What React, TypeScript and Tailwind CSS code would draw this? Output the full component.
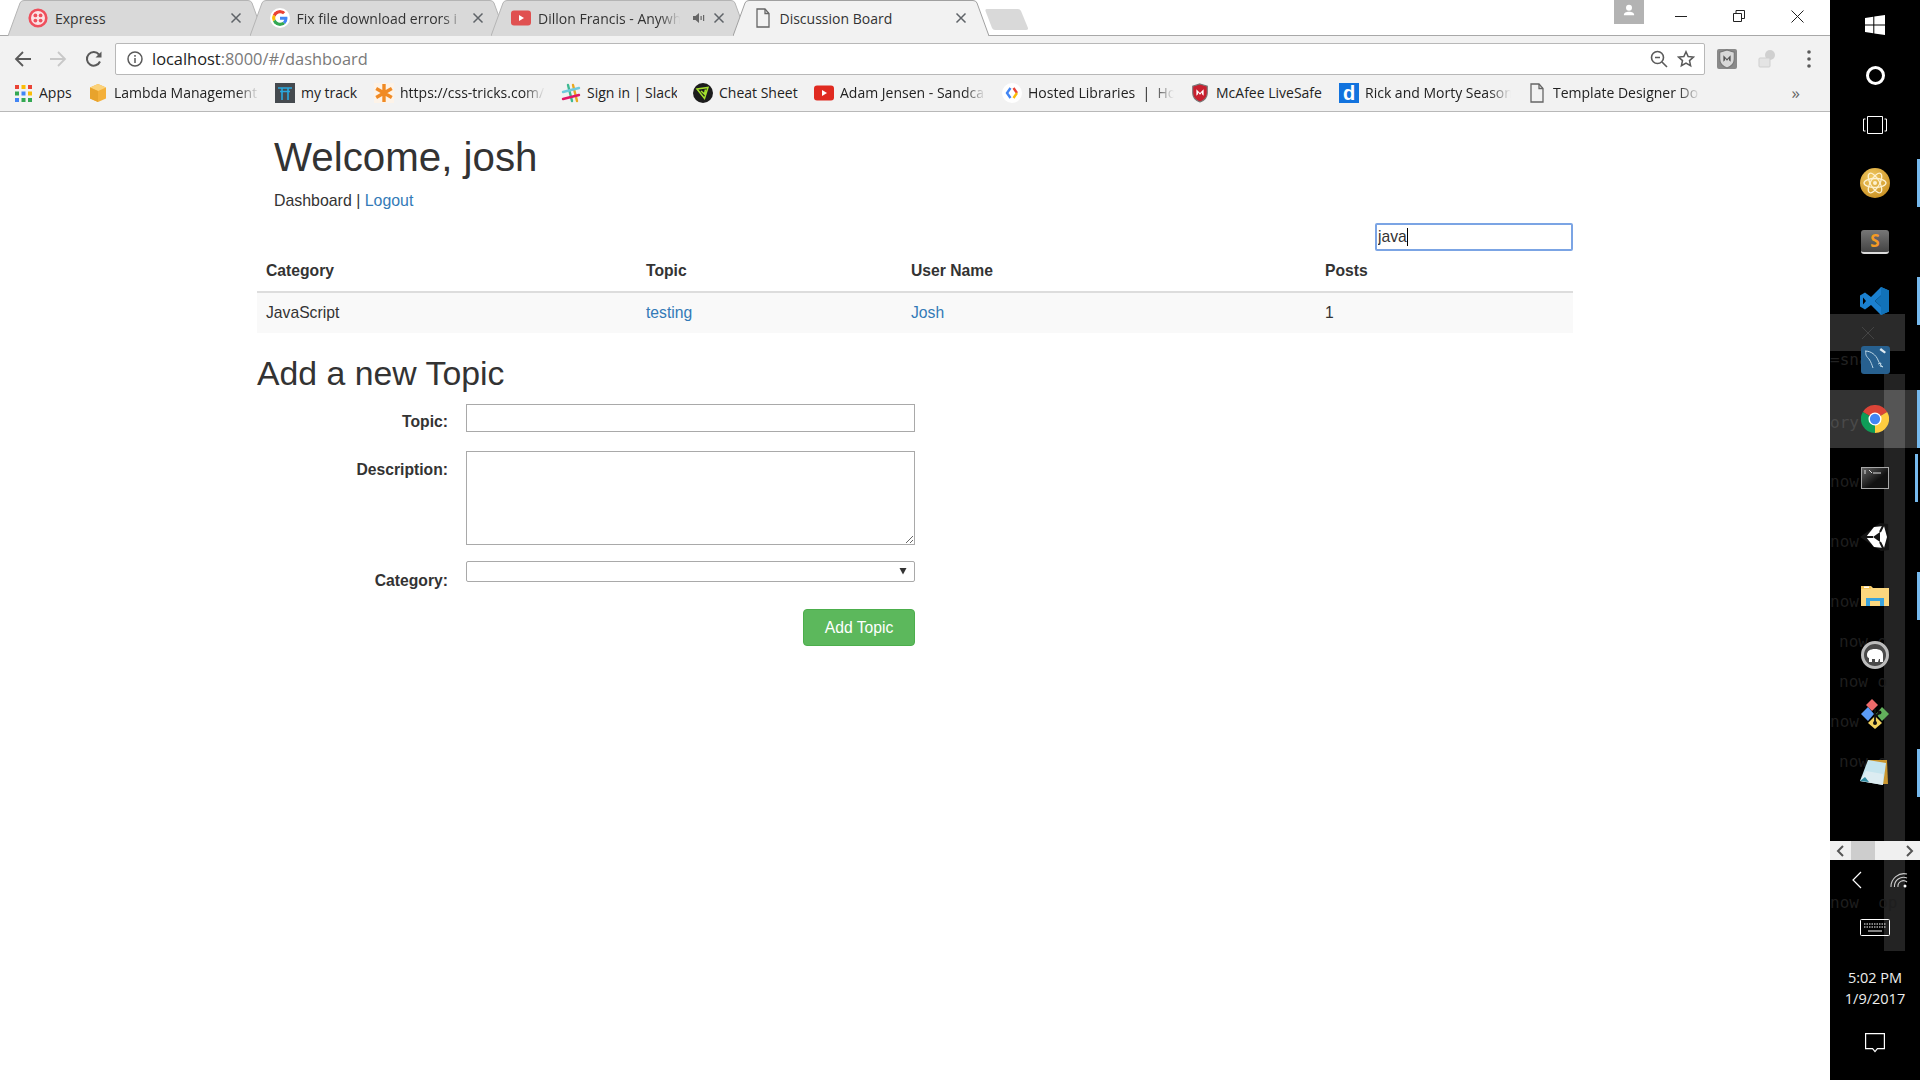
import type { ReactNode } from 'react'

const UI_FONT = 'font-["Open_Sans",sans-serif]'

const FileIcon = ({ className = '' }: { className?: string }) => (
  <svg viewBox="0 0 14 20" className={`h-5 w-[14px] ${className}`} fill="none" stroke="#666" strokeWidth="1.3">
    <path d="M1 1h8l4 4.5V19H1z" />
    <path d="M9 1v4.5h4" />
  </svg>
)

const TwilioIcon = () => (
  <svg viewBox="0 0 20 20" className="size-5">
    <circle cx="10" cy="10" r="8.3" fill="#fbe3e5" stroke="#ef4f5c" strokeWidth="2.6" />
    <circle cx="7.4" cy="7.4" r="1.9" fill="#ef4f5c" />
    <circle cx="12.6" cy="7.4" r="1.9" fill="#ef4f5c" />
    <circle cx="7.4" cy="12.6" r="1.9" fill="#ef4f5c" />
    <circle cx="12.6" cy="12.6" r="1.9" fill="#ef4f5c" />
  </svg>
)

const GoogleIcon = () => (
  <svg viewBox="0 0 48 48" className="size-5 rounded-full bg-white p-[2px]">
    <path fill="#EA4335" d="M24 9.5c3.5 0 6.700 1.300 9.200 3.400l6.900-6.900C35.900 2.400 30.300 0 24 0 14.600 0 6.500 5.400 2.600 13.200l8 6.200C12.500 13.600 17.800 9.500 24 9.500z" />
    <path fill="#4285F4" d="M46.500 24.500c0-1.600-.2-3.100-.4-4.500H24v9h12.700c-.6 2.900-2.200 5.400-4.700 7l7.600 5.900c4.400-4.100 6.900-10.100 6.900-17.400z" />
    <path fill="#FBBC05" d="M10.600 28.600c-.5-1.400-.8-3-.8-4.600s.3-3.200.8-4.600l-8-6.200C.9 16.500 0 20.100 0 24s.9 7.500 2.600 10.800l8-6.200z" />
    <path fill="#34A853" d="M24 48c6.500 0 11.900-2.100 15.900-5.800L32 36.300c-2.100 1.400-4.800 2.300-8 2.300-6.200 0-11.500-4.100-13.400-9.800l-8 6.200C6.500 42.600 14.600 48 24 48z" />
  </svg>
)

const YoutubeIcon = ({ color = '#e02a20' }: { color?: string }) => (
  <svg viewBox="0 0 20 16" className="h-4 w-5">
    <rect width="20" height="15" y="0.500" rx="3" fill={color} />
    <path d="M8 5l5 3-5 3z" fill="#fff" />
  </svg>
)

const CloseIcon = () => (
  <svg viewBox="0 0 12 12" className="size-3 shrink-0" stroke="#5f6368" strokeWidth="1.500">
    <path d="M1.500 1.500l9 9M10.500 1.500l-9 9" />
  </svg>
)

const SpeakerIcon = () => (
  <svg viewBox="0 0 12 12" className="size-3 shrink-0" fill="#666">
    <path d="M0 4h2.500L6 1v10L2.500 8H0z" />
    <rect x="7.500" y="4" width="1.200" height="4" />
    <rect x="10" y="3" width="1.200" height="6" />
  </svg>
)

function Tab({ label, icon, active, audio, dim }: { label: string; icon: ReactNode; active?: boolean; audio?: boolean; dim?: boolean }) {
  return (
    <div className="relative -mr-[14.5px] flex h-9 w-[256px] shrink-0 items-center pr-[22px] pl-5">
      <svg viewBox="0 0 256 36" className={`absolute inset-0 h-9 w-[256px] ${active ? 'z-10' : ''}`} fill="none">
        <path
          d="M0 36 L12 3 Q13 .5 16 .5 L240 .5 Q243 .5 244 3 L256 36"
          fill={active ? '#f2f2f2' : '#d9d9d9'}
          stroke={active ? '#a0a0a0' : '#b4b4b4'}
        />
      </svg>
      <div className="relative z-10 flex w-full items-center">
        <span className="flex w-5 shrink-0 justify-center">{icon}</span>
        <span
          className={`mt-[2px] ml-[7px] min-w-0 flex-1 overflow-hidden text-[14px] leading-5 whitespace-nowrap text-[#333] ${
            dim ? '[mask-image:linear-gradient(to_right,#000_84%,transparent_98%)]' : ''
          } ${audio ? 'mr-[10px]' : 'mr-[3px]'}`}
        >
          {label}
        </span>
        {audio && (
          <span className="mr-[8px]">
            <SpeakerIcon />
          </span>
        )}
        <CloseIcon />
      </div>
    </div>
  )
}

function TabStrip() {
  return (
    <div className="relative flex h-9 items-start bg-white pl-2">
      <div className="absolute inset-x-0 bottom-0 h-px bg-[#a8a8a8]" />
      <Tab label="Express" icon={<TwilioIcon />} />
      <Tab label="Fix file download errors i" icon={<GoogleIcon />} dim />
      <Tab label="Dillon Francis - Anywh" icon={<YoutubeIcon color="#e05050" />} audio dim />
      <Tab label="Discussion Board" icon={<FileIcon />} active />
      <svg viewBox="0 0 43 21" className="relative mt-[9px] ml-[11px] h-[21px] w-[43px] shrink-0">
        <path d="M2 0 H33 Q35 0 36 2 L43 19 Q43.500 21 41 21 H10 Q8 21 7 19 L.5 2 Q0 0 2 0z" fill="#d9d9d9" />
      </svg>
      <div className="relative ml-auto flex items-start pr-1">
        <div className="mr-2 flex h-6 w-[30px] items-center justify-center bg-[#b3b3b3] pb-1">
          <svg viewBox="0 0 14 14" className="size-3" fill="#fff">
            <circle cx="7" cy="4.500" r="3.500" />
            <path d="M1 13c0-3 2.500-4 6-4s6 1 6 4z" />
          </svg>
        </div>
        <div className="flex h-8 w-[58px] items-center justify-center">
          <div className="h-px w-3 bg-[#222]" />
        </div>
        <div className="flex h-8 w-[58px] items-center justify-center">
          <svg viewBox="0 0 12 12" className="size-3" fill="none" stroke="#222">
            <path d="M.5 3.500h8v8h-8zM3 3.500v-3h8.500v8h-3" />
          </svg>
        </div>
        <div className="flex h-8 w-[58px] items-center justify-center">
          <svg viewBox="0 0 13 13" className="size-[13px]" fill="none" stroke="#222">
            <path d="M.5.5l12 12M12.500.5l-12 12" />
          </svg>
        </div>
      </div>
    </div>
  )
}

const McafeeShield = ({ dark }: { dark?: boolean }) => (
  <svg viewBox="0 0 20 22" className="h-5 w-5">
    <path d="M10 1l8 2.500V11c0 5-4 8.500-8 10-4-1.500-8-5-8-10V3.500z" fill={dark ? '#d8d8d8' : '#c8202f'} stroke="#777" strokeWidth="1.200" />
    <path d="M6 14V7l4 4 4-4v7l-1.800-1.500v-2L10 13l-2.200-2.500v2z" fill={dark ? '#555' : '#fff'} />
  </svg>
)

function Toolbar() {
  return (
    <div className="flex h-[44px] items-center bg-[#f2f2f2] pt-px pl-[5px]">
      <button className="flex w-[35px] justify-center">
        <svg viewBox="0 0 18 18" className="size-[18px]" fill="none" stroke="#5a5a5a" strokeWidth="1.800">
          <path d="M17 9H2M9 2L2 9l7 7" />
        </svg>
      </button>
      <button className="flex w-[35px] justify-center">
        <svg viewBox="0 0 18 18" className="size-[18px]" fill="none" stroke="#c8c8c8" strokeWidth="1.800">
          <path d="M1 9h15M9 2l7 7-7 7" />
        </svg>
      </button>
      <button className="flex w-[35px] justify-center pl-[2px]">
        <svg viewBox="0 0 18 18" className="size-[18px]" fill="none" stroke="#5a5a5a" strokeWidth="2">
          <path d="M15 11.500A6.800 6.800 0 1 1 14 4.500" />
          <path d="M16.500 1.500v6h-6z" fill="#5a5a5a" stroke="none" />
        </svg>
      </button>
      <div className="ml-[5px] flex h-8 w-[1590px] items-center rounded-[2px] border border-[#b8b8b8] bg-white pr-[9px] pl-[11px]">
        <svg viewBox="0 0 16 16" className="size-4 shrink-0" fill="none" stroke="#5a5a5a" strokeWidth="1.500">
          <circle cx="8" cy="8" r="7" />
          <path d="M8 7v5M8 4v1.800" />
        </svg>
        <span className="ml-[9px] flex-1 text-[16.400px] leading-6 text-[#222]">
          localhost<span className="text-[#7a7a7a]">:8000/#/dashboard</span>
        </span>
        <svg viewBox="0 0 18 18" className="size-[18px]" fill="none" stroke="#5a5a5a" strokeWidth="1.600">
          <circle cx="7.500" cy="7.500" r="6" />
          <path d="M5 7.500h5M12 12l5 5" />
        </svg>
        <svg viewBox="0 0 20 20" className="ml-[9px] size-[18px]" fill="none" stroke="#5a5a5a" strokeWidth="1.700">
          <path d="M10 2l2.400 5.300 5.800.6-4.300 3.900 1.200 5.700L10 14.600l-5.100 2.900 1.200-5.700L1.800 7.900l5.800-.6z" />
        </svg>
      </div>
      <span className="ml-[12px] flex size-5 items-center justify-center rounded-[2px] bg-[#8a8a8a]">
        <McafeeShield dark />
      </span>
      <svg viewBox="0 0 20 20" className="ml-[20px] size-5">
        <circle cx="13" cy="6" r="5" fill="#d0d0d0" />
        <rect x="2" y="9" width="11" height="9" rx="1" fill="#e4e4e4" stroke="#cfcfcf" />
      </svg>
      <svg viewBox="0 0 4 18" className="ml-[30px] h-[18px] w-1" fill="#5a5a5a">
        <circle cx="2" cy="2" r="1.800" />
        <circle cx="2" cy="9" r="1.800" />
        <circle cx="2" cy="16" r="1.800" />
      </svg>
    </div>
  )
}

const AppsIcon = () => (
  <svg viewBox="0 0 17 17" className="size-[17px]">
    {['#ea4335', '#fbbc05', '#ea4335', '#34a853', '#4285f4', '#fbbc05', '#4285f4', '#34a853', '#34a853'].map((c, i) => (
      <rect key={i} x={(i % 3) * 6.500} y={Math.floor(i / 3) * 6.500} width="4" height="4" fill={c} />
    ))}
  </svg>
)

const LambdaIcon = () => (
  <svg viewBox="0 0 20 20" className="size-5">
    <path d="M10 1l8 3.500v11L10 19l-8-3.500v-11z" fill="#f4b03a" />
    <path d="M2 4.500L10 8l8-3.500L10 1z" fill="#fbd27a" />
    <path d="M10 8v11l-8-3.500v-11z" fill="#e8a32c" />
  </svg>
)

const TrackIcon = () => (
  <span className="flex size-5 items-center justify-center bg-[#454a4f]">
    <svg viewBox="0 0 14 14" className="size-[14px]" fill="none" stroke="#29a9e0" strokeWidth="1.600">
      <path d="M0 2h14M2 5.500h10M4 2v12M10 2v12" />
    </svg>
  </span>
)

const AsteriskIcon = () => (
  <span className="flex size-5 items-center justify-center bg-[#fdf3e8]">
    <svg viewBox="0 0 20 20" className="size-5" stroke="#f08a24" strokeWidth="3.400">
      <path d="M10 1v18M2.200 5.500l15.600 9M17.800 5.500l-15.600 9" />
    </svg>
  </span>
)

const SlackIcon = () => (
  <svg viewBox="0 0 20 20" className="size-5" strokeWidth="2.400" strokeLinecap="round">
    <path d="M7 2l4 16" stroke="#3eb991" />
    <path d="M13 2l4 16" stroke="#e9a820" transform="translate(-1 0)" />
    <path d="M2 7l16-4" stroke="#6ecadc" transform="translate(0 2)" />
    <path d="M2 16l16-4" stroke="#e01765" />
  </svg>
)

const CheatIcon = () => (
  <svg viewBox="0 0 20 20" className="size-5">
    <circle cx="10" cy="10" r="10" fill="#1c1c1c" />
    <path d="M4 6l11-1.500-3.500 11zM8 8l3.500 3 1-4.500" fill="none" stroke="#a5e22c" strokeWidth="1.500" />
  </svg>
)

const CodeIcon = () => (
  <svg viewBox="0 0 20 20" className="size-5">
    <circle cx="10" cy="10" r="10" fill="#fff" />
    <path d="M8.500 5L5 10l3.500 5" fill="none" stroke="#4285f4" strokeWidth="2.400" />
    <path d="M11.500 5l3.500 5" fill="none" stroke="#ea4335" strokeWidth="2.400" />
    <path d="M15 10l-3.500 5" fill="none" stroke="#fbbc05" strokeWidth="2.400" />
  </svg>
)

const DailyIcon = () => (
  <span className="flex size-5 items-center justify-center bg-[#1273de] text-[20px] leading-none font-bold text-white font-['Liberation_Sans',sans-serif]">
    d
  </span>
)

type Bookmark = { label: string; icon: ReactNode; width: string; fade?: boolean }

const bookmarks: Bookmark[] = [
  { label: 'Apps', icon: <AppsIcon />, width: 'w-[33px]' },
  { label: 'Lambda Management', icon: <LambdaIcon />, width: 'w-[145px]', fade: true },
  { label: 'my track', icon: <TrackIcon />, width: 'w-[57px]' },
  { label: 'https://css-tricks.com/', icon: <AsteriskIcon />, width: 'w-[145px]', fade: true },
  { label: 'Sign in | Slack', icon: <SlackIcon />, width: 'w-[90px]' },
  { label: 'Cheat Sheet', icon: <CheatIcon />, width: 'w-[79px]' },
  { label: 'Adam Jensen - Sandca', icon: <YoutubeIcon />, width: 'w-[146px]', fade: true },
  { label: 'Hosted Libraries  |  Ho', icon: <CodeIcon />, width: 'w-[146px]', fade: true },
  { label: 'McAfee LiveSafe', icon: <McafeeShield />, width: 'w-[107px]' },
  { label: 'Rick and Morty Season', icon: <DailyIcon />, width: 'w-[146px]', fade: true },
  { label: 'Template Designer Do', icon: <FileIcon />, width: 'w-[147px]', fade: true },
]

function BookmarkBar() {
  return (
    <div className="flex h-[32px] items-start gap-4 border-b border-[#b8b8b8] bg-[#f2f2f2] pl-[13px]">
      {bookmarks.map((b) => (
        <div key={b.label} className="flex h-[26px] items-center gap-[6px]">
          <span className="flex w-5 shrink-0 justify-center">{b.icon}</span>
          <span
            className={`overflow-hidden text-[14px] leading-5 whitespace-pre text-[#222] ${b.width} ${
              b.fade ? '[mask-image:linear-gradient(to_right,#000_85%,transparent_100%)]' : ''
            }`}
          >
            {b.label}
          </span>
        </div>
      ))}
      <span className="ml-auto mr-[30px] text-[17px] leading-[26px] text-[#666]">»</span>
    </div>
  )
}

function Dashboard() {
  return (
    <main className="ml-[257px] w-[1316px] pt-[24px] text-[15.700px] leading-[22px] text-[#333] font-['Liberation_Sans',sans-serif]">
      <div className="pl-[17px]">
        <h1 className="text-[40.300px] leading-[44px]">Welcome, josh</h1>
        <p className="mt-[10px] text-[15.900px]">
          Dashboard | <a className="text-[#337ab7]">Logout</a>
        </p>
      </div>
      <div className="relative mt-[11px] flex justify-end">
        <input
          readOnly
          value="java"
          className="h-7 w-[198px] rounded-[2px] border-2 border-[#7ba4e4] px-px text-[15.700px] leading-6 text-[#333] outline-none"
        />
        <span className="absolute top-[5px] left-[1150px] h-[18px] w-px bg-black" />
      </div>
      <table className="w-full table-fixed border-collapse">
        <colgroup>
          <col className="w-[379px]" />
          <col className="w-[265px]" />
          <col className="w-[414px]" />
          <col />
        </colgroup>
        <thead>
          <tr className="h-[41px] border-b-2 border-[#ddd] text-left">
            <th className="px-[9px] font-bold">Category</th>
            <th className="px-[10px] font-bold">Topic</th>
            <th className="px-[10px] font-bold">User Name</th>
            <th className="px-[10px] font-bold">Posts</th>
          </tr>
        </thead>
        <tbody>
          <tr className="h-[41px] bg-[#f9f9f9]">
            <td className="px-[9px]">JavaScript</td>
            <td className="px-[10px] text-[#337ab7]">testing</td>
            <td className="px-[10px] text-[#337ab7]">Josh</td>
            <td className="px-[10px]">1</td>
          </tr>
        </tbody>
      </table>
      <h2 className="mt-[22px] text-[33.800px] leading-9">Add a new Topic</h2>
      <form className="mt-[13px] w-[658px]">
        <div className="flex items-start">
          <label className="w-[191px] pt-[7px] text-right font-bold">Topic:</label>
          <input className="ml-[18px] h-7 w-[449px] border border-[#a9a9a9]" />
        </div>
        <div className="mt-[18px] flex items-start">
          <label className="w-[191px] pt-2 text-right font-bold">Description:</label>
          <textarea className="ml-[18px] block h-[94px] w-[449px] border border-[#a9a9a9]" />
        </div>
        <div className="mt-[16px] flex items-start">
          <label className="w-[191px] pt-[9px] text-right font-bold">Category:</label>
          <div className="relative ml-[18px] h-[21px] w-[449px]">
            <select className="block h-full w-full appearance-none rounded-[2px] border border-[#a9a9a9] bg-white" />
            <svg viewBox="0 0 8 8" className="pointer-events-none absolute top-[6px] right-[8px] size-2" fill="#333">
              <path d="M.5 1h7L4 7.500z" />
            </svg>
          </div>
        </div>
        <div className="mt-[17px] flex justify-end">
          <button type="button" className="h-[37px] w-[112px] rounded-[4px] border border-[#4cae4c] bg-[#5cb85c] text-white">
            Add Topic
          </button>
        </div>
      </form>
    </main>
  )
}

const Strip = ({ className }: { className: string }) => <span className={`absolute w-[3px] bg-[#76b9ed] ${className}`} />

const ghostNow = [
  { cls: 'top-[470px] left-0', text: 'now' },
  { cls: 'top-[530px] left-0', text: 'now' },
  { cls: 'top-[590px] left-0', text: 'now' },
  { cls: 'top-[630px] left-[9px]', text: 'now o' },
  { cls: 'top-[670px] left-[9px]', text: 'now o' },
  { cls: 'top-[710px] left-0', text: 'now' },
  { cls: 'top-[750px] left-[9px]', text: 'now o' },
  { cls: 'top-[891px] left-0', text: 'now  op' },
]

function Backdrop() {
  return (
    <div className="pointer-events-none absolute inset-0 font-['DejaVu_Sans_Mono',monospace] text-[16px] leading-6 whitespace-pre">
      <div className="absolute top-[314px] left-0 flex h-[37px] w-[75px] items-center justify-center bg-[#2a2a2a]">
        <svg viewBox="0 0 14 14" className="size-[14px]" stroke="#444">
          <path d="M1 1l12 12M13 1L1 13" />
        </svg>
      </div>
      <div className="absolute top-[374px] bottom-[129px] left-[54px] w-[21px] bg-[#232323]" />
      <div className="absolute top-[390px] left-0 h-[58px] w-full bg-[#333]" />
      <div className="absolute top-[390px] left-[54px] h-[58px] w-[21px] bg-[#555]" />
      <span className="absolute top-[348px] left-0 text-[#222]">=sna</span>
      <span className="absolute top-[411px] left-0 text-[#4a4a4a]">ory</span>
      {ghostNow.map((g) => (
        <span key={g.cls} className={`absolute text-[#1e1e1e] ${g.cls}`}>
          {g.text}
        </span>
      ))}
    </div>
  )
}

const App = ({ children }: { children: ReactNode }) => <div className="flex h-[59px] items-center justify-center">{children}</div>

function Sidebar() {
  return (
    <aside className="relative flex h-[1080px] w-[90px] shrink-0 flex-col bg-black text-white font-['Open_Sans',sans-serif]">
      <Backdrop />
      <Strip className="top-[159px] right-0 h-[48px]" />
      <Strip className="top-[277px] right-0 h-[48px]" />
      <Strip className="top-[390px] right-0 h-[58px]" />
      <Strip className="top-[454px] right-[2px] h-[48px]" />
      <Strip className="top-[572px] right-0 h-[48px]" />
      <Strip className="top-[749px] right-0 h-[48px]" />

      <div className="relative flex h-[50px] items-center justify-center">
        <svg viewBox="0 0 20 20" className="size-5" fill="#fff">
          <path d="M0 3l8.300-1.200V9.500H0zM9.300 1.600L20 0v9.500H9.300zM0 10.500h8.300v7.700L0 17zM9.300 10.500H20V20L9.300 18.400z" />
        </svg>
      </div>
      <div className="relative flex h-[50px] items-center justify-center">
        <div className="size-[19px] rounded-full border-[3px] border-white" />
      </div>
      <div className="relative flex h-[50px] items-center justify-center">
        <svg viewBox="0 0 24 18" className="h-[18px] w-6" fill="none" stroke="#fff" strokeWidth="1">
          <path d="M4.500.5h15v17h-15zM2.500 3H.5v12h2M21.500 3h2v12h-2" />
        </svg>
      </div>

      <div className="relative mt-[3px] flex flex-col">
        <App>
          <svg viewBox="0 0 30 30" className="size-[30px]">
            <defs>
              <radialGradient id="atomGold" cx="0.400" cy="0.300" r="0.800">
                <stop offset="0" stopColor="#f0c860" />
                <stop offset="1" stopColor="#c88e20" />
              </radialGradient>
            </defs>
            <circle cx="15" cy="15" r="15" fill="url(#atomGold)" />
            <g fill="none" stroke="#fdf1cf" strokeWidth="1.300">
              <ellipse cx="15" cy="15" rx="11" ry="4.500" />
              <ellipse cx="15" cy="15" rx="11" ry="4.500" transform="rotate(60 15 15)" />
              <ellipse cx="15" cy="15" rx="11" ry="4.500" transform="rotate(120 15 15)" />
            </g>
            <circle cx="15" cy="15" r="2" fill="#fdf1cf" />
          </svg>
        </App>
        <App>
          <div className="relative flex h-6 w-7 items-center justify-center rounded-[3px] border-b-2 border-[#ddd] bg-gradient-to-b from-[#777] to-[#444] text-[17px] leading-none font-bold text-[#f59a23]">
            S
          </div>
        </App>
        <App>
          <svg viewBox="0 0 30 30" className="size-[30px]">
            <path d="M21 1l8 3.500v21L21 29 11 19l-6 4.500-5-3v-11l5-3 6 4.500zM21 9.500L15 15l6 5.500z" fill="#1b80cf" fillRule="evenodd" />
            <path d="M21 1l8 3.500v21L21 29z M21 9.500L15 15l6 5.500z" fill="#1172b9" fillRule="evenodd" />
            <path d="M3 11.500l3 3.500-3 3.500z" fill="#000" />
          </svg>
        </App>
        <App>
          <svg viewBox="0 0 29 28" className="h-7 w-[29px]">
            <rect width="29" height="28" rx="3" fill="#27608f" />
            <path d="M4 5c6 0 11 4 13 9 1 3 3 5 5 7M5 5c-1 4 1 6 3 8 2 3 3 6 4 9M17 18l3-1-1 3 3 1" fill="none" stroke="#b9d3e3" strokeWidth="1" />
            <path d="M20 2l5 4-1.500 1.500-5-3.500z" fill="#dfeaf1" />
          </svg>
        </App>
        <App>
          <svg viewBox="0 0 30 30" className="size-7">
            <path d="M15 15L28 7.500A15 15 0 0 0 2 7.500z" fill="#db4437" />
            <path d="M15 15l-13-7.500A15 15 0 0 0 15 30z" fill="#0f9d58" />
            <path d="M15 15l13-7.500A15 15 0 0 1 15 30z" fill="#ffcd40" />
            <circle cx="15" cy="15" r="7" fill="#fff" />
            <circle cx="15" cy="15" r="5.500" fill="#4285f4" />
          </svg>
        </App>
        <App>
          <svg viewBox="0 0 28 22" className="h-[22px] w-7">
            <defs>
              <linearGradient id="cmdGloss" x1="0" y1="0" x2="1" y2="1">
                <stop offset="0" stopColor="#666" />
                <stop offset="0.600" stopColor="#111" />
              </linearGradient>
            </defs>
            <rect x=".5" y=".5" width="27" height="21" fill="url(#cmdGloss)" stroke="#a8a8a8" />
            <path d="M3 4h2M3 6h2M8 3l3 3M12 6h8" stroke="#ddd" strokeWidth="1" />
          </svg>
        </App>
        <App>
          <svg viewBox="0 0 30 30" className="size-[30px]">
            <path d="M0 15L20 1l8 1 1 26-8 1z" fill="#141414" />
            <path d="M24 4l3 11-3 11-10-1-8-10 8-10z" fill="#fff" />
            <path d="M20 10l3.500-7M20 20l3.500 7M13 15H4" stroke="#141414" strokeWidth="2" fill="none" />
            <path d="M13 15l7-5v10z" fill="#141414" />
          </svg>
        </App>
        <App>
          <svg viewBox="0 0 28 24" className="h-6 w-7">
            <path d="M0 2h10l2 2h16v18H0z" fill="#fcd77e" />
            <rect y="2" width="10" height="3" fill="#f7c75a" />
            <rect x="3" y="2.500" width="5" height="1.500" fill="#fff" />
            <path d="M5 22v-8h18v8h-4v-5H9v5z" fill="#3aa3dd" />
          </svg>
        </App>
        <App>
          <svg viewBox="0 0 28 28" className="size-7">
            <circle cx="14" cy="14" r="12.500" fill="#4a4a4a" stroke="#bdbdbd" strokeWidth="3" />
            <path d="M6 14c0-4 3-6 8-6s8 2 8 6v7h-3v-3h-1l-1 3h-3v-3h-3v3H8v-4c-1 0-2-1-2-3z" fill="#fff" />
          </svg>
        </App>
        <App>
          <svg viewBox="0 0 30 30" className="size-[30px]">
            <path d="M15 0l-6 6 6 6 6-6z" fill="#ee6a6a" transform="translate(-3 0)" />
            <path d="M8 8l-7 7 7 7 6-7z" fill="#5b9cf7" />
            <path d="M22 8l7 7-7 7-6-7z" fill="#62b05c" />
            <path d="M15 17l-7 7 7 6 7-6z" fill="#f4d35e" />
            <path d="M15 10v15M19 14l-4 4" stroke="#111" strokeWidth="1.800" fill="none" />
            <circle cx="15" cy="24" r="2" fill="#111" />
            <circle cx="19.500" cy="13.500" r="2" fill="#111" />
          </svg>
        </App>
        <App>
          <svg viewBox="0 0 30 28" className="h-7 w-[30px]">
            <path d="M8 1h19l1 24-9 0z" fill="#c9962f" />
            <path d="M8 1l18 3-3 22L0 22z" fill="#c5e5ee" />
            <path d="M0 22l6-10 17 3v11z" fill="#dcecf1" />
            <path d="M0 22l5-4 4 5z" fill="#2f8aa0" />
          </svg>
        </App>
      </div>

      <div className="relative mt-[39px] flex h-[19px] items-center bg-[#f0f0f0] text-[#555]">
        <svg viewBox="0 0 8 12" className="ml-[6px] h-3 w-2" fill="none" stroke="#555" strokeWidth="2">
          <path d="M7 1L2 6l5 5" />
        </svg>
        <div className="ml-[7px] h-[19px] w-6 bg-[#cdcdcd]" />
        <svg viewBox="0 0 8 12" className="ml-auto mr-[6px] h-3 w-2" fill="none" stroke="#555" strokeWidth="2">
          <path d="M1 1l5 5-5 5" />
        </svg>
      </div>

      <div className="relative flex h-10 items-center justify-between pr-[12px] pl-[22px]">
        <svg viewBox="0 0 10 18" className="h-[18px] w-[10px]" fill="none" stroke="#fff" strokeWidth="1.200">
          <path d="M9 1L1 9l8 8" />
        </svg>
        <svg viewBox="0 0 18 16" className="h-4 w-[18px]" fill="none" stroke="#ccc" strokeWidth="1.100">
          <path d="M1 15A13 13 0 0 1 17 2M4.500 15A9 9 0 0 1 17 6M8 15a5.500 5.500 0 0 1 9-5" />
          <circle cx="15" cy="14" r="1.500" fill="#fff" stroke="none" />
        </svg>
      </div>

      <div className="relative mt-[19px] flex justify-center">
        <svg viewBox="0 0 30 17" className="h-[17px] w-[30px]" fill="none" stroke="#fff">
          <rect x=".5" y=".5" width="29" height="16" rx="1" />
          <path d="M4 5h22M4 8h22" strokeDasharray="1.500 1" />
          <path d="M8 12h14" />
        </svg>
      </div>

      <div className="relative mt-[31px] text-center text-[14.500px] leading-[21px] text-[#eee]">
        <div>5:02 PM</div>
        <div>1/9/2017</div>
      </div>

      <div className="relative mt-[24px] flex justify-center">
        <svg viewBox="0 0 20 20" className="size-5" fill="none" stroke="#fff" strokeWidth="1.200">
          <path d="M.6.6h18.800v15h-7l-2.400 3-2.400-3h-7z" />
        </svg>
      </div>
    </aside>
  )
}

export default function DiscussionBoardScreen() {
  return (
    <div className="flex h-[1080px] w-[1920px] overflow-hidden bg-white">
      <div className={`w-[1830px] shrink-0 ${UI_FONT}`}>
        <TabStrip />
        <Toolbar />
        <BookmarkBar />
        <Dashboard />
      </div>
      <Sidebar />
    </div>
  )
}
